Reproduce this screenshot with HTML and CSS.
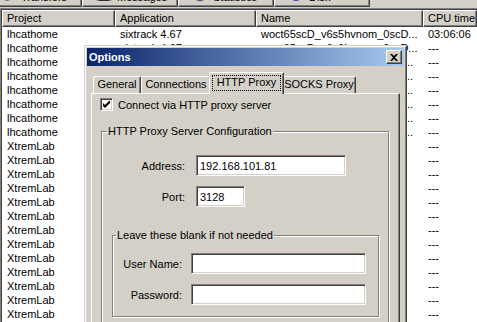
FILE: index.html
```html
<!DOCTYPE html>
<html lang="en">

<head>
    <meta charset="utf-8">
    <title>BOINC Manager - Options</title>
    <link rel="stylesheet" href="styles.css">
</head>

<body>

    <nav class="tabs">
        <div class="tab first">
            <svg width="16" height="16" viewBox="0 0 16 16"><circle cx="7" cy="8" r="5" fill="#e8e4dc" stroke="#505050" stroke-width="1.5"/></svg>
            <span>Transfers</span>
        </div>
        <div class="tab">
            <svg width="16" height="16" viewBox="0 0 16 16"><rect x="1" y="4" width="14" height="9" fill="#d8d8d8" stroke="#303030"/><rect x="3" y="12" width="10" height="2" fill="#303030"/></svg>
            <span>Messages</span>
        </div>
        <div class="tab">
            <svg width="16" height="16" viewBox="0 0 16 16"><circle cx="8" cy="8" r="6" fill="#a0a0a0" stroke="#606060"/><circle cx="8" cy="12" r="2" fill="#6a4aa0"/></svg>
            <span>Statistics</span>
        </div>
        <div class="tab">
            <svg width="16" height="16" viewBox="0 0 16 16"><ellipse cx="8" cy="11" rx="4" ry="3" fill="#5a3aa0"/></svg>
            <span>Disk</span>
        </div>
    </nav>

    <section class="list">
        <div class="row head">
            <span>Project</span>
            <span>Application</span>
            <span>Name</span>
            <span>CPU time</span>
        </div>
        <div class="row"><span>lhcathome</span><span>sixtrack 4.67</span><span>woct65scD_v6s5hvnom_0scD...</span><span>03:06:06</span></div>
        <div class="row"><span>lhcathome</span><span>sixtrack 4.67</span><span>woct65scD_v6s6hvnom_0scD...</span><span>---</span></div>
        <div class="row"><span>lhcathome</span><span></span><span class="tail">...</span><span>---</span></div>
        <div class="row"><span>lhcathome</span><span></span><span class="tail">...</span><span>---</span></div>
        <div class="row"><span>lhcathome</span><span></span><span class="tail">...</span><span>---</span></div>
        <div class="row"><span>lhcathome</span><span></span><span class="tail">...</span><span>---</span></div>
        <div class="row"><span>lhcathome</span><span></span><span class="tail">...</span><span>---</span></div>
        <div class="row"><span>lhcathome</span><span></span><span class="tail">...</span><span>---</span></div>
        <div class="row"><span>XtremLab</span><span></span><span></span><span>---</span></div>
        <div class="row"><span>XtremLab</span><span></span><span></span><span>---</span></div>
        <div class="row"><span>XtremLab</span><span></span><span></span><span>---</span></div>
        <div class="row"><span>XtremLab</span><span></span><span></span><span>---</span></div>
        <div class="row"><span>XtremLab</span><span></span><span></span><span>---</span></div>
        <div class="row"><span>XtremLab</span><span></span><span></span><span>---</span></div>
        <div class="row"><span>XtremLab</span><span></span><span></span><span>---</span></div>
        <div class="row"><span>XtremLab</span><span></span><span></span><span>---</span></div>
        <div class="row"><span>XtremLab</span><span></span><span></span><span>---</span></div>
        <div class="row"><span>XtremLab</span><span></span><span></span><span>---</span></div>
        <div class="row"><span>XtremLab</span><span></span><span></span><span>---</span></div>
        <div class="row"><span>XtremLab</span><span></span><span></span><span>---</span></div>
        <div class="row"><span>XtremLab</span><span></span><span></span><span>---</span></div>
    </section>

    <div class="dialog">
        <div class="titlebar">
            <span>Options</span>
            <button class="close">
                <svg width="8" height="7" viewBox="0 0 8 7"><path d="M0 0h2l2 2 2-2h2L5 3.5 8 7H6L4 5 2 7H0l3-3.5z" fill="#000"/></svg>
            </button>
        </div>

        <div class="pages">
            <div class="page-tab w-general">General</div>
            <div class="page-tab w-conn">Connections</div>
            <div class="page-tab selected"><span class="focus">HTTP Proxy</span></div>
            <div class="page-tab w-socks">SOCKS Proxy</div>
        </div>

        <div class="panel">
            <label class="check">
                <span class="box">
                    <svg width="7" height="7" viewBox="0 0 7 7"><polygon points="0,2 2,4 7,-1 7,2 2,7 0,5" fill="#000"/></svg>
                </span>
                Connect via HTTP proxy server
            </label>

            <div class="group outer">
                <div class="legend">HTTP Proxy Server Configuration</div>
                <div class="field addr">
                    <span class="lbl">Address:</span>
                    <input class="txt wide" value="192.168.101.81">
                </div>
                <div class="field port">
                    <span class="lbl">Port:</span>
                    <input class="txt short" value="3128">
                </div>

                <div class="group inner">
                    <div class="legend">Leave these blank if not needed</div>
                    <div class="field user">
                        <span class="lbl">User Name:</span>
                        <input class="txt long" value="">
                    </div>
                    <div class="field pass">
                        <span class="lbl">Password:</span>
                        <input class="txt long" type="password" value="">
                    </div>
                </div>
            </div>
        </div>
    </div>

</body>

</html>
```

FILE: styles.css
```css
body {
    margin: 0;
    width: 477px;
    height: 322px;
    overflow: hidden;
    position: relative;
    background-color: #d4d0c8;
    font-family: "Liberation Sans", Arial, sans-serif;
    font-size: 11px;
    color: #000;
}

/* top tab strip, mostly scrolled off */
.tabs {
    display: flex;
    height: 7px;
    overflow: hidden;
    margin-left: -14px;
}

.tab {
    box-sizing: border-box;
    width: 96px;
    height: 23px;
    margin-top: -16px;
    padding-left: 13px;
    display: flex;
    align-items: center;
    gap: 5px;
    border-left: 1px solid #fff;
    border-right: 1px solid #404040;
    border-bottom: 1px solid #404040;
    box-shadow: inset -1px -1px 0 #808080;
}

.tab span {
    margin-top: 4px;
}

.tab svg {
    flex: none;
}

/* list view */
.list {
    margin-top: 1px;
    height: 313px;
    overflow: hidden;
    background-color: #fff;
    border-top: 1px solid #808080;
    border-left: 1px solid #808080;
    box-shadow: inset 1px 1px 0 #404040;
    padding: 1px 0 0 1px;
}

.row {
    display: grid;
    grid-template-columns: 113px 141px 167px 1fr;
    height: 14px;
    line-height: 14px;
}

.row span {
    padding-left: 5px;
    white-space: nowrap;
    overflow: hidden;
}

.row span.tail {
    padding: 0 10px 0 0;
    text-align: right;
}

.row.head {
    height: 17px;
    line-height: 16px;
}

.row.head span {
    background-color: #d4d0c8;
    padding-left: 4px;
    border-top: 1px solid #fff;
    border-left: 1px solid #fff;
    border-right: 1px solid #404040;
    border-bottom: 1px solid #404040;
    box-shadow: inset -1px -1px 0 #808080;
    line-height: 14px;
}

/* options dialog */
.dialog {
    position: absolute;
    left: 84px;
    top: 45px;
    width: 323px;
    height: 300px;
    box-sizing: border-box;
    background-color: #d4d0c8;
    border: 1px solid;
    border-color: #d4d0c8 #404040 #404040 #d4d0c8;
    box-shadow: inset 1px 1px 0 #fff, inset -1px -1px 0 #808080;
    padding: 2px;
}

.titlebar {
    height: 18px;
    display: flex;
    align-items: center;
    justify-content: space-between;
    padding: 0 2px 0 2px;
    background: linear-gradient(to right, #0a246a, #a6caf0);
    color: #fff;
    font-weight: bold;
}

.close {
    box-sizing: border-box;
    width: 16px;
    height: 14px;
    padding: 0;
    display: flex;
    align-items: center;
    justify-content: center;
    background-color: #d4d0c8;
    border: 1px solid;
    border-color: #fff #404040 #404040 #fff;
    box-shadow: inset -1px -1px 0 #808080;
}

.pages {
    display: flex;
    align-items: flex-end;
    margin: 6px 4px 0 4px;
    padding-left: 2px;
    height: 21px;
}

.page-tab {
    box-sizing: border-box;
    height: 17px;
    line-height: 15px;
    text-align: center;
    white-space: nowrap;
    border-top: 1px solid #fff;
    border-left: 1px solid #fff;
    border-right: 1px solid #404040;
    box-shadow: inset -1px 0 0 #808080;
    border-radius: 2px 2px 0 0;
    background-color: #d4d0c8;
}

.w-general {
    width: 48px;
}

.w-conn {
    width: 70px;
}

.w-socks {
    width: 74px;
}

.page-tab.selected {
    position: relative;
    z-index: 1;
    width: 75px;
    height: 22px;
    margin: 0 -2px -1px -2px;
    padding-top: 2px;
    line-height: 15px;
}

.focus {
    display: block;
    margin: 0 2px;
    height: 16px;
    outline: 1px dotted #000;
    outline-offset: -1px;
}

.panel {
    margin: 0 4px;
    height: 240px;
    border-top: 1px solid #fff;
    border-left: 1px solid #fff;
    border-right: 1px solid #404040;
    box-shadow: inset -1px 0 0 #808080;
    padding: 4px 10px 0 8px;
}

.check {
    display: flex;
    align-items: center;
    gap: 5px;
    height: 13px;
}

.box {
    box-sizing: border-box;
    width: 13px;
    height: 13px;
    display: flex;
    align-items: center;
    justify-content: center;
    background-color: #fff;
    border: 1px solid;
    border-color: #808080 #fff #fff #808080;
    box-shadow: inset 1px 1px 0 #404040, inset -1px -1px 0 #d4d0c8;
}

.group {
    border: 1px solid #808080;
    box-shadow: inset 1px 1px 0 #fff, 1px 1px 0 #fff;
}

.group.outer {
    margin: 20px 0 0 1px;
    height: 200px;
}

.group.inner {
    margin: 28px 9px 0 10px;
    padding-bottom: 11px;
}

.legend {
    display: table;
    margin: -7px 0 0 5px;
    padding: 0 1px;
    line-height: 13px;
    background-color: #d4d0c8;
}

.group.inner .legend {
    margin-left: 3px;
}

.field {
    display: flex;
    align-items: center;
    gap: 11px;
    margin-top: 10px;
}

.field.addr {
    margin-top: 17px;
}

.field.user {
    margin-top: 11px;
}

.lbl {
    width: 83px;
    text-align: right;
}

.group.inner .lbl {
    width: 69px;
}

.group.inner .field {
    gap: 9px;
}

.txt {
    box-sizing: border-box;
    height: 21px;
    margin: 0;
    padding: 0 0 0 3px;
    font-family: "Liberation Sans", Arial, sans-serif;
    font-size: 11px;
    color: #000;
    background-color: #fff;
    border: 1px solid;
    border-color: #808080 #fff #fff #808080;
    box-shadow: inset 1px 1px 0 #404040, inset -1px -1px 0 #d4d0c8;
    outline: none;
}

.wide {
    width: 150px;
}

.short {
    width: 49px;
}

.long {
    width: 175px;
}
```
